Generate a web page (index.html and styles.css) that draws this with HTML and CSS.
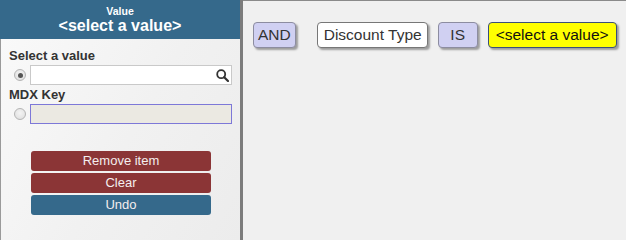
FILE: index.html
```html
<!DOCTYPE html>
<html>
<head>
<meta charset="utf-8">
<link rel="stylesheet" href="styles.css">
</head>
<body>
<div class="app">
  <aside class="panel">
    <div class="panel-head">
      <div class="head-small">Value</div>
      <div class="head-big">&lt;select a value&gt;</div>
    </div>
    <div class="panel-body">
      <div class="label label-first">Select a value</div>
      <div class="row">
        <span class="radio radio-on"></span>
        <div class="field field-search">
          <svg class="search-icon" width="13" height="13" viewBox="0 0 13 13"><circle cx="5.2" cy="5.2" r="4" fill="none" stroke="#333" stroke-width="1.8"/><line x1="8.2" y1="8.2" x2="12" y2="12" stroke="#333" stroke-width="2.2" stroke-linecap="round"/></svg>
        </div>
      </div>
      <div class="label">MDX Key</div>
      <div class="row">
        <span class="radio"></span>
        <div class="field field-key"></div>
      </div>
      <div class="buttons">
        <div class="btn btn-red">Remove item</div>
        <div class="btn btn-red">Clear</div>
        <div class="btn btn-blue">Undo</div>
      </div>
    </div>
  </aside>
  <main class="canvas">
    <div class="tokens">
      <span class="token token-op token-and">AND</span>
      <span class="token token-field">Discount Type</span>
      <span class="token token-op token-is">IS</span>
      <span class="token token-value">&lt;select a value&gt;</span>
    </div>
  </main>
</div>
</body>
</html>
```
FILE: styles.css
```css
html, body {
  margin: 0;
  padding: 0;
}
body {
  font-family: Arial, "Liberation Sans", sans-serif;
  background: #f0f0f0;
}
.app {
  display: flex;
  min-height: 100vh;
}
.panel {
  width: 240px;
  flex: none;
  border-right: 3px solid #7c7c7c;
  display: flex;
  flex-direction: column;
  background: linear-gradient(120deg, #fafafa 0%, #f1f1f1 55%, #ececec 100%);
}
.panel-head {
  height: 39px;
  flex: none;
  background: #35698b;
  color: #fff;
  text-align: center;
  font-weight: bold;
  box-sizing: border-box;
  padding-top: 5px;
}
.head-small {
  font-size: 10.5px;
  line-height: 12px;
}
.head-big {
  font-size: 16px;
  line-height: 17px;
}
.panel-body {
  flex: 1;
  padding: 0 8px 0 8px;
  border-left: 1px solid #9a9a9a;
}
.label {
  font-size: 13px;
  font-weight: bold;
  color: #333;
  line-height: 15px;
  margin-top: 2px;
}
.label-first {
  margin-top: 9px;
}
.row {
  display: flex;
  align-items: center;
  margin-top: 2px;
}
.radio {
  width: 10px;
  height: 10px;
  border: 1px solid #b4b4b4;
  border-radius: 50%;
  background: radial-gradient(circle at 50% 40%, #f4f4f4 0%, #dcdcdc 100%);
  margin: 0 4px 0 5px;
  position: relative;
  flex: none;
}
.radio-on::after {
  content: "";
  position: absolute;
  left: 2.5px;
  top: 2.5px;
  width: 5px;
  height: 5px;
  border-radius: 50%;
  background: #555;
}
.field {
  width: 200px;
  height: 18px;
  box-sizing: content-box;
  display: flex;
  align-items: center;
  justify-content: flex-end;
}
.field-search {
  background: #fff;
  border: 1px solid #c9c9c9;
}
.search-icon {
  margin-right: 2px;
}
.field-key {
  background: #ebe9e2;
  border: 1px solid #7d78d8;
  height: 18px;
}
.buttons {
  display: flex;
  flex-direction: column;
  align-items: center;
  gap: 2px;
  margin-top: 27px;
  padding-left: 1px;
}
.btn {
  width: 180px;
  height: 20px;
  line-height: 20px;
  border-radius: 3px;
  color: #f4eeee;
  font-size: 13px;
  text-align: center;
}
.btn-red {
  background: #8b3536;
}
.btn-blue {
  background: #35698b;
}
.canvas {
  flex: 1;
  border-top: 1px solid #8a8a8a;
  background: #f0f0f0;
}
.tokens {
  display: flex;
  align-items: center;
  padding: 21px 0 0 10px;
}
.token {
  font-size: 15.5px;
  line-height: 24px;
  height: 24px;
  padding: 0 5px;
  border: 1px solid #858585;
  border-radius: 4px;
  color: #333;
  box-shadow: 2px 2px 2px rgba(0, 0, 0, 0.35);
  text-align: center;
  white-space: nowrap;
}
.token-op {
  background: #d0d0f2;
  border-color: #8c8ca0;
}
.token-and {
  padding: 0 4px;
  margin-right: 21px;
}
.token-is {
  min-width: 28px;
  margin: 0 10px;
}
.token-field {
  background: #fff;
  border-color: #777;
  padding: 0 5px 0 6px;
}
.token-value {
  background: #ffff00;
  border-color: #3a4f7a;
  color: #111;
  padding: 0 7px;
}
```
